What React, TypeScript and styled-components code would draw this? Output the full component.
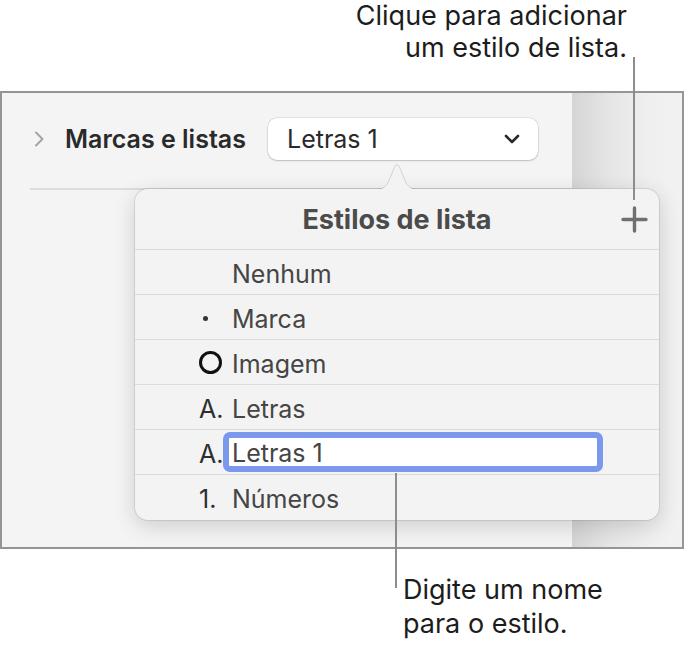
import React from "react";
import styled, { createGlobalStyle } from "styled-components";

const GlobalStyle = createGlobalStyle`
  html, body { margin: 0; padding: 0; background: #ffffff; }
  body { font-family: Inter, "Noto Sans", "Liberation Sans", sans-serif; }
`;

const Page = styled.div`
  position: relative;
  width: 686px;
  height: 646px;
  background: #ffffff;
  overflow: hidden;
`;

const Callout = styled.div<{ $align: "left" | "right" }>`
  box-sizing: border-box;
  font-size: 27px;
  color: #1c1c1c;
  text-align: ${(p) => p.$align};
  white-space: nowrap;
`;

const TopCallout = styled(Callout)`
  height: 91px;
  line-height: 32px;
  padding-top: 0;
  padding-right: 59px;
`;

const BottomCallout = styled(Callout)`
  margin-top: 24px;
  line-height: 34px;
  padding-left: 403px;
`;

const Leader = styled.div<{ $left: number; $top: number; $height: number }>`
  position: absolute;
  left: ${(p) => p.$left}px;
  top: ${(p) => p.$top}px;
  width: 2px;
  height: ${(p) => p.$height}px;
  background: #8d8d8d;
  z-index: 5;
`;

const Frame = styled.div`
  position: relative;
  box-sizing: border-box;
  width: 684px;
  height: 458px;
  border: 2px solid #959595;
  display: flex;
`;

const MainPanel = styled.div`
  width: 570px;
  background: #f4f4f4;
`;

const SideStrip = styled.div`
  flex: 1;
  background: linear-gradient(to right, #d5d5d5 0%, #e6e6e6 35%, #efefef 70%, #f2f2f2 100%);
`;

const SectionRow = styled.div`
  display: flex;
  align-items: center;
  padding: 25px 0 0 31px;
`;

const Disclosure = styled.svg`
  width: 12px;
  height: 18px;
  flex: none;
`;

const SectionLabel = styled.div`
  width: 203px;
  margin-left: 20px;
  font-size: 25px;
  font-weight: 600;
  color: #2a2a2a;
  white-space: nowrap;
`;

const Dropdown = styled.div`
  box-sizing: border-box;
  width: 270px;
  height: 42px;
  padding: 0 18px 0 19px;
  display: flex;
  align-items: center;
  justify-content: space-between;
  background: #ffffff;
  border-radius: 9px;
  box-shadow: 0 0 0 0.5px rgba(0, 0, 0, 0.14), 0 1px 2px rgba(0, 0, 0, 0.16);
  font-size: 25px;
  color: #2a2a2a;
`;

const Divider = styled.div`
  margin: 28px 0 0 28px;
  height: 2px;
  background: #dcdcdc;
`;

const Popover = styled.div`
  position: absolute;
  left: 133px;
  top: 96px;
  width: 524px;
  height: 331px;
  box-sizing: border-box;
  background: #f3f3f3;
  border-radius: 13px;
  box-shadow: 0 0 0 1px rgba(0, 0, 0, 0.09), 0 6px 22px rgba(0, 0, 0, 0.16);
  z-index: 2;
`;

const Arrow = styled.svg`
  position: absolute;
  left: 240px;
  top: -27px;
  width: 44px;
  height: 28px;
`;

const PopHeader = styled.div`
  box-sizing: border-box;
  height: 61px;
  display: grid;
  grid-template-columns: 1fr auto 1fr;
  align-items: center;
  border-bottom: 1px solid #dcdcdc;
`;

const PopTitle = styled.div`
  grid-column: 2;
  font-size: 27px;
  font-weight: 700;
  color: #4b4b4b;
  white-space: nowrap;
`;

const PlusButton = styled.svg`
  grid-column: 3;
  justify-self: end;
  margin-right: 11px;
  width: 27px;
  height: 27px;
`;

const StyleRow = styled.div<{ $last?: boolean }>`
  box-sizing: border-box;
  height: 45px;
  padding-top: 3px;
  display: flex;
  align-items: center;
  padding-left: 64px;
  border-bottom: ${(p) => (p.$last ? "none" : "1px solid #dcdcdc")};
`;

const Marker = styled.div`
  width: 33px;
  flex: none;
  display: flex;
  align-items: center;
  font-size: 25px;
  color: #2e2e2e;
`;

const Dot = styled.span`
  width: 5px;
  height: 5px;
  margin-left: 4px;
  border-radius: 50%;
  background: #333333;
`;

const Ring = styled.span`
  box-sizing: border-box;
  width: 23px;
  height: 23px;
  margin-top: -2px;
  border-radius: 50%;
  border: 3.5px solid #111111;
`;

const StyleName = styled.div`
  font-size: 25px;
  color: #454545;
  white-space: nowrap;
`;

const NameField = styled.div`
  box-sizing: border-box;
  width: 380px;
  height: 40px;
  margin-left: -9px;
  margin-top: -3px;
  padding-left: 3px;
  padding-top: 2px;
  display: flex;
  align-items: center;
  background: #ffffff;
  border: 6px solid #7b99ec;
  border-radius: 7px;
  font-size: 25px;
  color: #454545;
`;

type Row = { marker: "none" | "dot" | "ring" | string; name: string; editing?: boolean };

const rows: Row[] = [
  { marker: "none", name: "Nenhum" },
  { marker: "dot", name: "Marca" },
  { marker: "ring", name: "Imagem" },
  { marker: "A.", name: "Letras" },
  { marker: "A.", name: "Letras 1", editing: true },
  { marker: "1.", name: "Números" },
];

const renderMarker = (m: Row["marker"]) => {
  if (m === "none") return null;
  if (m === "dot") return <Dot />;
  if (m === "ring") return <Ring />;
  return m;
};

export default function App() {
  return (
    <Page>
      <GlobalStyle />
      <TopCallout $align="right">
        Clique para adicionar
        <br />
        um estilo de lista.
      </TopCallout>
      <Frame>
        <MainPanel>
          <SectionRow>
            <Disclosure viewBox="0 0 12 18">
              <path d="M3 2.5 L9.5 9 L3 15.5" fill="none" stroke="#a3a3a3" strokeWidth="2" strokeLinecap="round" strokeLinejoin="round" />
            </Disclosure>
            <SectionLabel>Marcas e listas</SectionLabel>
            <Dropdown>
              <span>Letras 1</span>
              <svg width="16" height="10" viewBox="0 0 16 10">
                <path d="M2 2 L8 8 L14 2" fill="none" stroke="#2a2a2a" strokeWidth="2.6" strokeLinecap="round" strokeLinejoin="round" />
              </svg>
            </Dropdown>
          </SectionRow>
          <Divider />
        </MainPanel>
        <SideStrip />
        <Popover>
          <Arrow viewBox="0 0 44 28">
            <path
              d="M0 27.5 C7 27.5 10 25.5 13 21 L19.5 5 Q22 0.5 24.5 5 L31 21 C34 25.5 37 27.5 44 27.5"
              fill="#f3f3f3"
              stroke="rgba(0,0,0,0.13)"
              strokeWidth="1"
            />
            <rect x="0" y="27" width="44" height="1" fill="#f3f3f3" />
          </Arrow>
          <PopHeader>
            <PopTitle>Estilos de lista</PopTitle>
            <PlusButton viewBox="0 0 27 27">
              <path d="M13.5 2 V25 M2 13.5 H25" stroke="#6f6f6f" strokeWidth="3.4" strokeLinecap="round" />
            </PlusButton>
          </PopHeader>
          {rows.map((r, i) => (
            <StyleRow key={i} $last={i === rows.length - 1}>
              <Marker>{renderMarker(r.marker)}</Marker>
              {r.editing ? <NameField>{r.name}</NameField> : <StyleName>{r.name}</StyleName>}
            </StyleRow>
          ))}
        </Popover>
      </Frame>
      <BottomCallout $align="left">
        Digite um nome
        <br />
        para o estilo.
      </BottomCallout>
      <Leader $left={633} $top={57} $height={143} />
      <Leader $left={395} $top={473} $height={115} />
    </Page>
  );
}
